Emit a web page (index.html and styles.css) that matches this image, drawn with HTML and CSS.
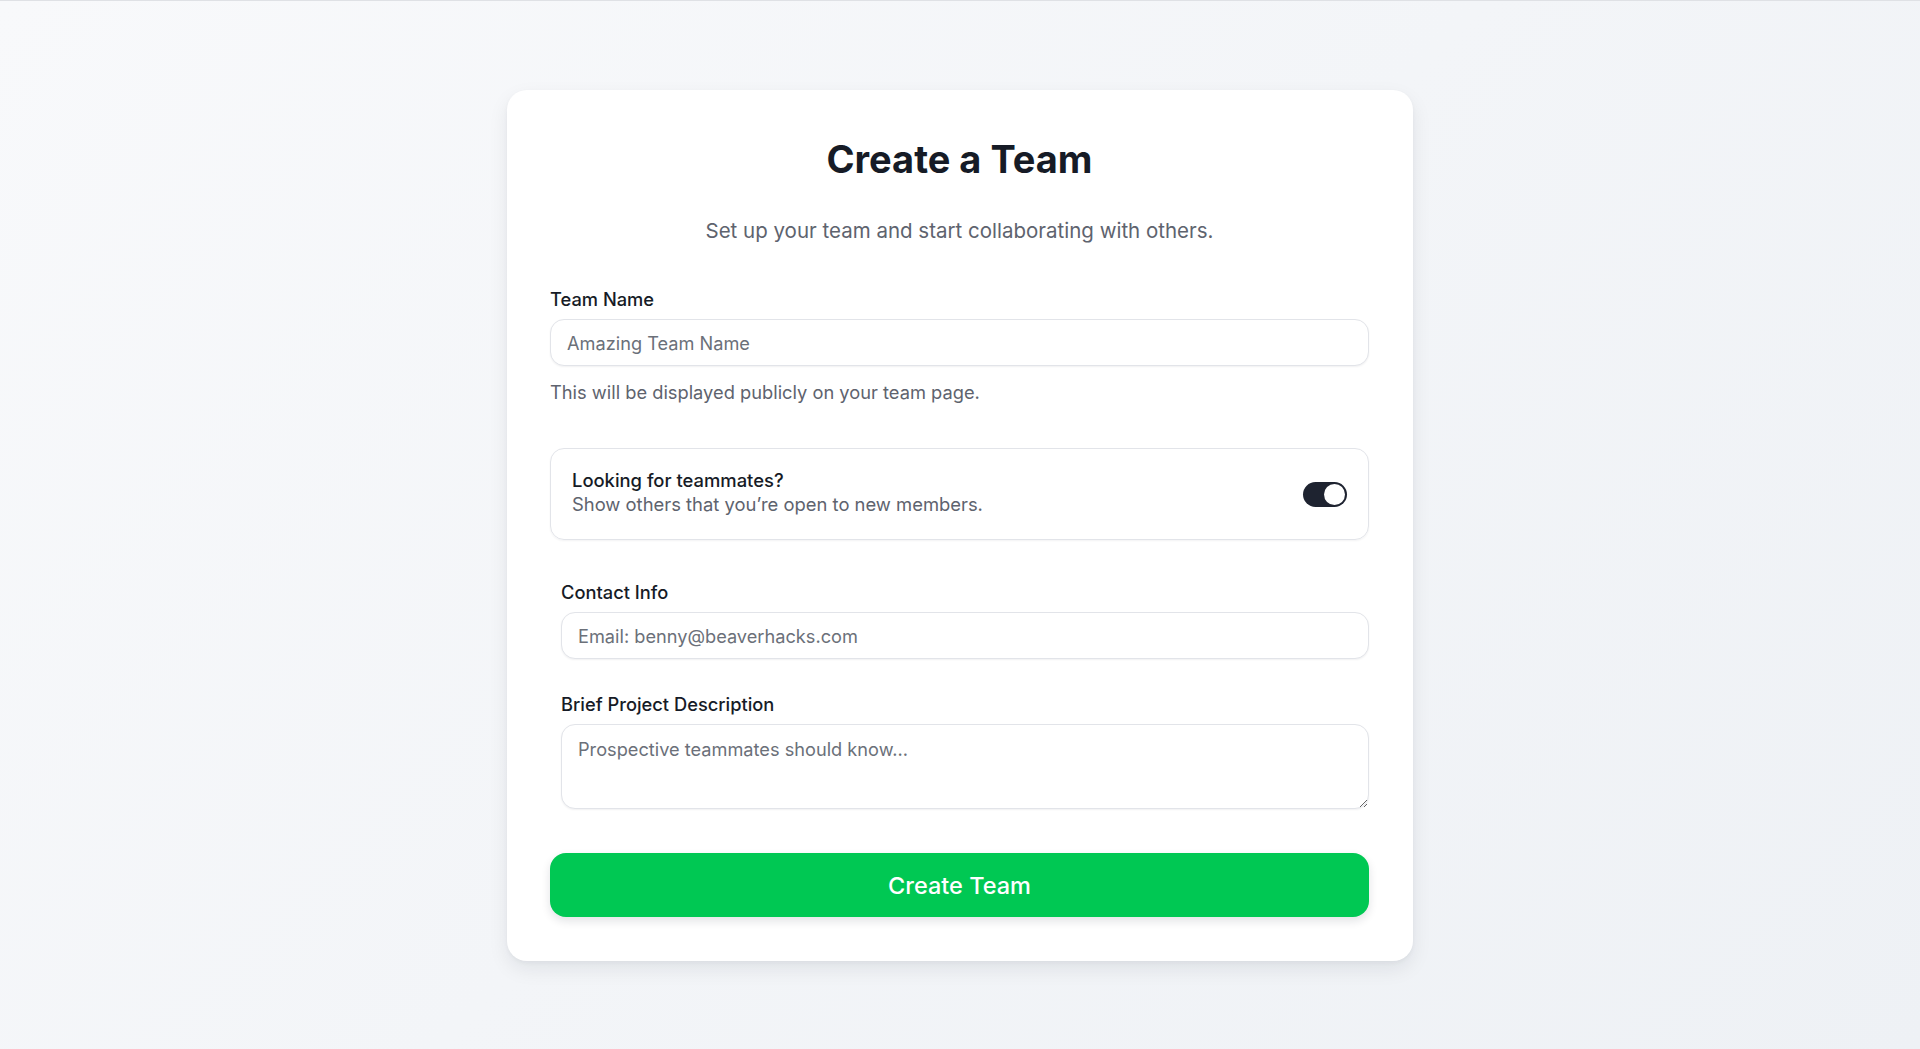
FILE: index.html
```html
<!DOCTYPE html>
<html lang="en">
<head>
    <meta charset="UTF-8">
    <meta name="viewport" content="width=device-width, initial-scale=1.0">
    <title>Create a Team</title>
    <link rel="stylesheet" href="styles.css">
</head>
<body>
    <main class="page">
        <form class="team-card">
            <h1 class="team-title">Create a Team</h1>
            <p class="team-subtitle">Set up your team and start collaborating with others.</p>

            <div class="field">
                <label class="field-label" for="teamName">Team Name</label>
                <input class="field-input" id="teamName" type="text" placeholder="Amazing Team Name">
                <p class="field-help">This will be displayed publicly on your team page.</p>
            </div>

            <div class="toggle-box">
                <div class="toggle-text">
                    <div class="toggle-title">Looking for teammates?</div>
                    <div class="toggle-desc">Show others that you’re open to new members.</div>
                </div>
                <span class="switch"><span class="switch-thumb"></span></span>
            </div>

            <div class="extra-fields">
                <div class="field">
                    <label class="field-label" for="contact">Contact Info</label>
                    <input class="field-input" id="contact" type="text" placeholder="Email: benny@beaverhacks.com">
                </div>
                <div class="field">
                    <label class="field-label" for="desc">Brief Project Description</label>
                    <textarea class="field-input field-area" id="desc" placeholder="Prospective teammates should know..."></textarea>
                </div>
            </div>

            <button class="submit-btn" type="button">Create Team</button>
        </form>
    </main>
</body>
</html>
```

FILE: styles.css
```css
* {
    box-sizing: border-box;
}

body {
    margin: 0;
    min-height: 100vh;
    font-family: Inter, 'Noto Sans', sans-serif;
    background: linear-gradient(135deg, #f8f9fb, #eef1f5);
    border-top: 1px solid #dfe1e5;
    color: #111827;
}

.page {
    display: flex;
    justify-content: center;
    padding-top: 89px;
}

.team-card {
    width: 906px;
    background: #fff;
    border-radius: 20px;
    padding: 49px 44px 44px 43px;
    box-shadow: 0 8px 20px rgba(15, 23, 42, 0.08), 0 2px 4px rgba(15, 23, 42, 0.04);
    display: flex;
    flex-direction: column;
}

.team-title {
    margin: 0;
    font-size: 38px;
    line-height: 40px;
    font-weight: 700;
    text-align: center;
    color: #161b26;
}

.team-subtitle {
    margin: 38px 0 0;
    font-size: 20.5px;
    line-height: 28px;
    text-align: center;
    color: #5e636e;
}

.field {
    display: flex;
    flex-direction: column;
}

.team-subtitle + .field {
    margin-top: 42px;
}

.field-label {
    font-size: 18.3px;
    line-height: 24px;
    font-weight: 500;
    color: #161b26;
    margin-bottom: 8px;
}

.field-input {
    height: 47px;
    padding: 0 16px;
    border: 1px solid #e2e4e9;
    border-radius: 14px;
    font-family: inherit;
    font-size: 18.2px;
    color: #111827;
    background: #fff;
    box-shadow: 0 1px 2px rgba(15, 23, 42, 0.06);
    outline: none;
}

.field-input::placeholder {
    color: #6b7079;
}

.field-area {
    height: 85px;
    padding: 12px 16px;
    line-height: 24px;
    resize: vertical;
}

.field-help {
    margin: 14px 0 0;
    font-size: 18.3px;
    line-height: 24px;
    color: #5e636e;
}

.toggle-box {
    margin-top: 44px;
    display: flex;
    align-items: center;
    justify-content: space-between;
    padding: 19px 21px 23px 21px;
    border: 1px solid #e2e4e9;
    border-radius: 14px;
    box-shadow: 0 1px 2px rgba(15, 23, 42, 0.05);
}

.toggle-title {
    font-size: 18.4px;
    line-height: 24px;
    font-weight: 500;
    color: #161b26;
}

.toggle-desc {
    font-size: 18.4px;
    line-height: 24px;
    color: #5e636e;
}

.switch {
    width: 44px;
    height: 25px;
    margin-top: 4px;
    border-radius: 13px;
    background: #1e2330;
    display: flex;
    align-items: center;
    justify-content: flex-end;
    padding: 2px;
}

.switch-thumb {
    width: 21px;
    height: 21px;
    border-radius: 50%;
    background: #fff;
}

.extra-fields {
    margin-top: 40px;
    padding-left: 11px;
    display: flex;
    flex-direction: column;
    gap: 33px;
}

.submit-btn {
    margin-top: 44px;
    height: 64px;
    border: none;
    border-radius: 16px;
    background: #00c853;
    color: #fff;
    font-family: inherit;
    font-size: 23.5px;
    font-weight: 500;
    box-shadow: 0 4px 10px rgba(15, 23, 42, 0.12);
    cursor: pointer;
}
```
